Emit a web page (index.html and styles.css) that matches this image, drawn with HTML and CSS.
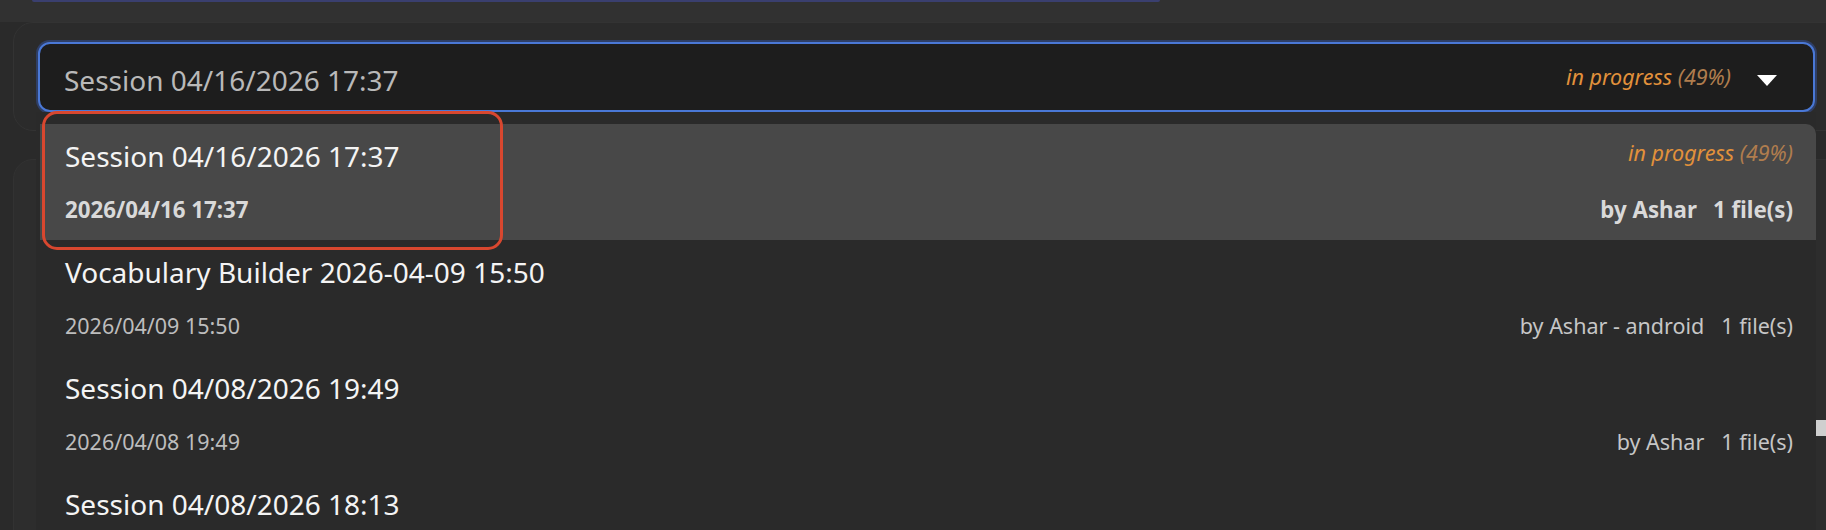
FILE: index.html
```html
<!DOCTYPE html>
<html lang="en">
<head>
<meta charset="utf-8">
<title>Session picker</title>
<link rel="stylesheet" href="styles.css">
</head>
<body>
<div class="page">
  <div class="topbar"></div>
  <section class="card card-select">
    <div class="select">
      <span class="select-value">Session 04/16/2026 17:37</span>
      <span class="status"><span class="status-main">in progress</span> <span class="status-pct">(49%)</span></span>
      <svg class="caret" width="20" height="11" viewBox="0 0 20 11"><path d="M0 0 H20 L10 11 Z" fill="#ffffff"/></svg>
    </div>
  </section>
  <section class="card card-body"></section>

  <ul class="menu">
    <li class="item active">
      <div class="row row-top">
        <span class="title">Session 04/16/2026 17:37</span>
        <span class="status"><span class="status-main">in progress</span> <span class="status-pct">(49%)</span></span>
      </div>
      <div class="row row-bottom">
        <span class="date">2026/04/16 17:37</span>
        <span class="meta"><span>by Ashar</span><span>1 file(s)</span></span>
      </div>
    </li>
    <li class="item">
      <div class="row row-top">
        <span class="title">Vocabulary Builder 2026-04-09 15:50</span>
      </div>
      <div class="row row-bottom">
        <span class="date">2026/04/09 15:50</span>
        <span class="meta"><span>by Ashar - android</span><span>1 file(s)</span></span>
      </div>
    </li>
    <li class="item">
      <div class="row row-top">
        <span class="title">Session 04/08/2026 19:49</span>
      </div>
      <div class="row row-bottom">
        <span class="date">2026/04/08 19:49</span>
        <span class="meta"><span>by Ashar</span><span>1 file(s)</span></span>
      </div>
    </li>
    <li class="item">
      <div class="row row-top">
        <span class="title">Session 04/08/2026 18:13</span>
      </div>
      <div class="row row-bottom">
        <span class="date">2026/04/08 18:13</span>
        <span class="meta"><span>by Ashar</span><span>1 file(s)</span></span>
      </div>
    </li>
  </ul>

  <div class="highlight-ring"></div>
  <div class="scroll-thumb"></div>
</div>
</body>
</html>
```

FILE: styles.css
```css
html, body {
  margin: 0;
  padding: 0;
}

body {
  background: #2b2b2b;
  font-family: "Noto Sans", "Open Sans", sans-serif;
  overflow: hidden;
  width: 1826px;
  height: 530px;
}

.page {
  position: relative;
  width: 1826px;
  height: 530px;
  overflow: hidden;
  background: linear-gradient(#313131 0, #313131 22px, #2a2a2a 22px);
}

.topbar {
  margin-left: 32px;
  width: 1128px;
  height: 2px;
  background: #3a3f6f;
  border-radius: 0 0 3px 3px;
}

.card {
  margin-left: 13px;
  margin-right: -30px;
  border-radius: 20px;
  border: 1px solid #333333;
}

.card-select {
  margin-top: 20px;
  background: #2b2b2b;
  padding: 19px 40px 18px 24px;
}

.card-body {
  margin-top: 28px;
  height: 420px;
  background: #2d2d2d;
  border-color: #323232;
}

.select {
  display: flex;
  align-items: flex-start;
  box-sizing: border-box;
  width: 1777px;
  height: 70px;
  padding: 19px 36px 0 24px;
  background: #1d1d1d;
  border: 2px solid #4a78d6;
  border-radius: 12px;
  box-shadow: 0 0 0 2px #2f3f66;
}

.select-value {
  flex: 1;
  font-size: 28px;
  line-height: 35px;
  color: #b9b9b9;
}

.select .status {
  margin-top: 0;
}

.status {
  font-style: italic;
  font-size: 21.5px;
  line-height: 28px;
  white-space: nowrap;
}

.status-main {
  color: #e2913b;
}

.status-pct {
  color: #b07d4e;
}

.caret {
  margin-left: 26px;
  margin-top: 12px;
  flex: none;
}

.menu {
  position: absolute;
  left: 36px;
  top: 112px;
  width: 1780px;
  margin: 0;
  padding: 12px 0 0 4px;
  box-sizing: border-box;
  list-style: none;
  background: #2a2a2a;
}

.item {
  height: 116px;
  box-sizing: border-box;
  padding: 15px 23px 0 25px;
}

.item.active {
  background: #484848;
  border-radius: 0 10px 0 0;
}

.row {
  display: flex;
  justify-content: space-between;
  align-items: flex-start;
}

.title {
  font-size: 28px;
  line-height: 35px;
  color: #f4f4f4;
}

.row-bottom {
  margin-top: 22px;
  align-items: baseline;
}

.date {
  font-size: 21.5px;
  line-height: 28px;
  color: #bdbdbd;
}

.meta {
  display: flex;
  gap: 17px;
  font-size: 21.5px;
  line-height: 28px;
  color: #c6c6c6;
}

.item.active .date,
.item.active .meta {
  font-weight: 700;
  font-size: 22.3px;
  color: #d9d9d9;
}

.item.active .meta {
  gap: 16px;
}

.highlight-ring {
  position: absolute;
  left: 42px;
  top: 111px;
  width: 455px;
  height: 133px;
  border: 3px solid #d8472f;
  border-radius: 15px;
}

.scroll-thumb {
  position: absolute;
  left: 1816px;
  top: 420px;
  width: 10px;
  height: 16px;
  background: #cfcfcf;
}
```
